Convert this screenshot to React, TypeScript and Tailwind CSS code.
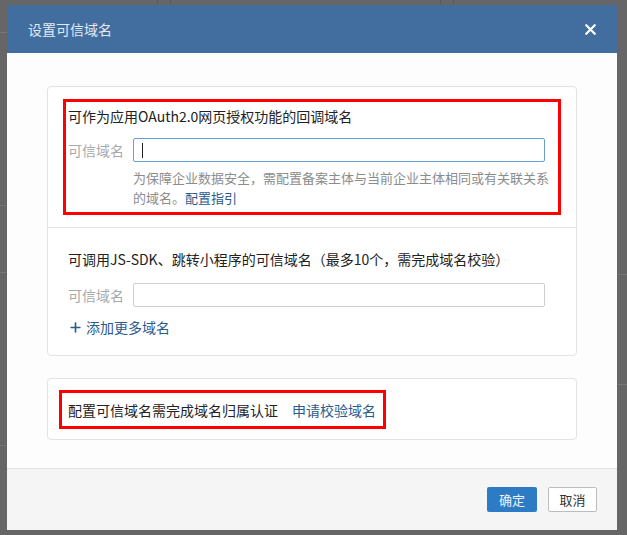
import { X, Plus } from 'lucide-react';

const font = { fontFamily: '"Noto Sans CJK SC", "Noto Sans", sans-serif' };

function DomainRow({ focused }: { focused?: boolean }) {
  return (
    <div className="flex items-center gap-2">
      <span className="w-[57px] shrink-0 text-[14px] leading-5 text-[#a9a9a9]">可信域名</span>
      <div
        className={`flex h-6 w-[412px] items-center rounded-[2px] border bg-white px-2 ${
          focused ? 'border-[#6a9fd6]' : 'border-[#cfcfcf]'
        }`}
      >
        {focused && <span className="h-[15px] w-px bg-[#222]" />}
      </div>
    </div>
  );
}

export default function App() {
  return (
    <div className="relative h-[535px] w-[627px] overflow-hidden bg-[#666666]" style={font}>
      {/* page behind the overlay */}
      <div className="absolute left-[157px] top-0 h-[5px] w-px bg-[#5c5c5c]" />
      <div className="absolute left-[170px] top-0 h-[5px] w-px bg-[#5c5c5c]" />
      <div className="absolute left-[440px] top-0 h-[5px] w-px bg-[#5c5c5c]" />
      <div className="absolute left-[453px] top-0 h-[5px] w-px bg-[#5c5c5c]" />
      <div className="absolute left-0 top-[32px] h-px w-[7px] bg-[#777]" />
      <div className="absolute left-0 top-[205px] h-px w-[7px] bg-[#777]" />
      <div className="absolute left-0 top-[272px] h-px w-[7px] bg-[#777]" />
      <div className="absolute left-0 top-[445px] h-px w-[7px] bg-[#777]" />
      <div className="absolute right-0 top-[274px] h-px w-[10px] bg-[#777]" />
      <div className="absolute right-0 top-[384px] h-px w-[10px] bg-[#777]" />

      {/* dialog */}
      <div className="absolute left-[7px] top-[5px] flex h-[525px] w-[610px] flex-col bg-[#fdfdfd]">
        <div className="flex h-[48px] shrink-0 items-center justify-between bg-[#426d9f] pl-[21px] pr-[18px]">
          <span className="text-[14px] text-[#e3eaf2]">设置可信域名</span>
          <X className="h-[17px] w-[17px] text-white" strokeWidth={3.2} />
        </div>

        <div className="flex flex-1 flex-col gap-[22px] px-10 pt-[33px]">
          <div className="rounded-[4px] border border-[#e3e3e3] bg-white">
            <div className="px-[15px] pb-[12px] pt-[12px]">
              <div className="border-[3px] border-[#ff0000] pb-[4px] pl-[2px] pt-[4px]">
                <div className="text-[14px] leading-5 text-[#222]">可作为应用OAuth2.0网页授权功能的回调域名</div>
                <div className="mt-[12px]">
                  <DomainRow focused />
                </div>
                <div className="ml-[65px] mt-[6px] text-[13px] leading-5 text-[#8c8c8c]">
                  <div className="whitespace-nowrap">为保障企业数据安全，需配置备案主体与当前企业主体相同或有关联关系</div>
                  <div className="whitespace-nowrap">
                    的域名。<span className="text-[#2b5b8d]">配置指引</span>
                  </div>
                </div>
              </div>
            </div>
            <div className="border-t border-[#e3e3e3] pb-[18px] pl-[20px] pt-[21px]">
              <div className="text-[14px] leading-5 text-[#222]">
                可调用JS-SDK、跳转小程序的可信域名（最多10个，需完成域名校验）
              </div>
              <div className="mt-[14px]">
                <DomainRow />
              </div>
              <div className="mt-[10px] flex items-center gap-[3px] text-[14px] leading-5 text-[#2b5b8d]">
                <Plus className="h-[15px] w-[15px]" strokeWidth={2.6} />
                <span>添加更多域名</span>
              </div>
            </div>
          </div>

          <div className="rounded-[4px] border border-[#e3e3e3] bg-white pb-[10px] pl-[11px] pt-[11px]">
            <div className="inline-flex gap-[14px] border-[3px] border-[#ff0000] pb-[6px] pl-[6px] pr-[7px] pt-[7px] text-[14px] leading-5">
              <span className="text-[#222]">配置可信域名需完成域名归属认证</span>
              <span className="text-[#2b5b8d]">申请校验域名</span>
            </div>
          </div>
        </div>

        <div className="flex h-[62px] shrink-0 items-center justify-end gap-[11px] border-t border-[#e2e2e2] bg-[#f5f5f5] pr-5">
          <button className="h-[25px] w-[50px] rounded-[2px] bg-[#2d7bc4] text-[13px] text-[#eef4fa]">确定</button>
          <button className="h-[25px] w-[49px] rounded-[2px] border border-[#bdbdbd] bg-white text-[13px] text-[#333]">
            取消
          </button>
        </div>
      </div>
    </div>
  );
}
